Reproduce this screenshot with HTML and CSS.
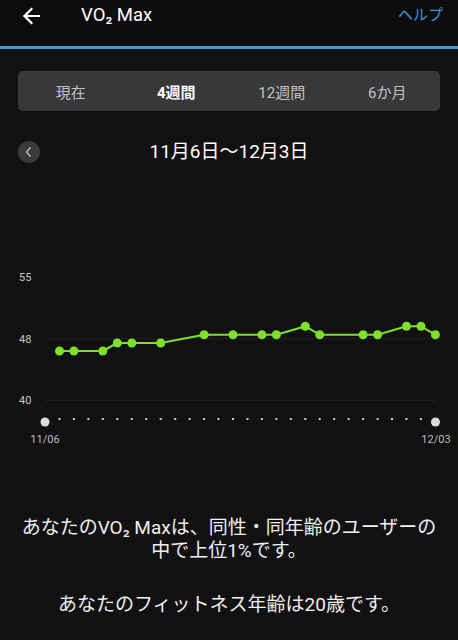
FILE: index.html
```html
<!DOCTYPE html>
<html lang="ja">
<head>
<meta charset="utf-8">
<link rel="stylesheet" href="styles.css">
</head>
<body>
<header class="topbar">
  <svg class="back-arrow" viewBox="0 0 18 18" width="18" height="18" aria-hidden="true">
    <path d="M17 9H2.5 M9.5 2L2.5 9L9.5 16" fill="none" stroke="#fff" stroke-width="2.2" stroke-linecap="square"/>
  </svg>
  <h1 class="title">VO₂ Max</h1>
  <a class="help">ヘルプ</a>
</header>

<section class="controls">
  <nav class="tabs">
    <div class="tab">現在</div>
    <div class="tab active">4週間</div>
    <div class="tab">12週間</div>
    <div class="tab">6か月</div>
  </nav>
  <div class="range">
    <div class="prev">
      <svg viewBox="0 0 22 22" width="22" height="22" aria-hidden="true">
        <path d="M12.5 6.5L8.5 11L12.5 15.5" fill="none" stroke="#bdbdbd" stroke-width="1.4"/>
      </svg>
    </div>
    <div class="range-text">11月6日〜12月3日</div>
    <div class="spacer"></div>
  </div>
</section>

<svg class="chart" viewBox="0 260 458 190" width="458" height="190">
  <g class="grid">
    <line x1="45" y1="338.7" x2="436" y2="338.7"/>
    <line x1="45" y1="400.3" x2="436" y2="400.3"/>
  </g>
  <g class="ylabels">
    <text x="19" y="280.5">55</text>
    <text x="19" y="342.5">48</text>
    <text x="19" y="404.2">40</text>
  </g>
  <g class="axis-dots">
    <rect x="58.5" y="418" width="2" height="2"/>
    <rect x="72.9" y="418" width="2" height="2"/>
    <rect x="87.4" y="418" width="2" height="2"/>
    <rect x="101.8" y="418" width="2" height="2"/>
    <rect x="116.3" y="418" width="2" height="2"/>
    <rect x="130.8" y="418" width="2" height="2"/>
    <rect x="145.2" y="418" width="2" height="2"/>
    <rect x="159.7" y="418" width="2" height="2"/>
    <rect x="174.2" y="418" width="2" height="2"/>
    <rect x="188.6" y="418" width="2" height="2"/>
    <rect x="203.1" y="418" width="2" height="2"/>
    <rect x="217.5" y="418" width="2" height="2"/>
    <rect x="232" y="418" width="2" height="2"/>
    <rect x="246.5" y="418" width="2" height="2"/>
    <rect x="260.9" y="418" width="2" height="2"/>
    <rect x="275.4" y="418" width="2" height="2"/>
    <rect x="289.8" y="418" width="2" height="2"/>
    <rect x="304.3" y="418" width="2" height="2"/>
    <rect x="318.7" y="418" width="2" height="2"/>
    <rect x="333.2" y="418" width="2" height="2"/>
    <rect x="347.6" y="418" width="2" height="2"/>
    <rect x="362.1" y="418" width="2" height="2"/>
    <rect x="376.6" y="418" width="2" height="2"/>
    <rect x="391" y="418" width="2" height="2"/>
    <rect x="405.5" y="418" width="2" height="2"/>
    <rect x="419.9" y="418" width="2" height="2"/>
  </g>
  <circle class="end-dot" cx="45" cy="422" r="4.5"/>
  <circle class="end-dot" cx="435.5" cy="422" r="4.5"/>
  <g class="xlabels">
    <text x="45" y="443">11/06</text>
    <text x="436" y="443">12/03</text>
  </g>
  <polyline class="series" points="59.5,351 73.9,351 102.8,351 117.3,343 131.8,343 160.7,343 204.1,334.7 233,334.7 261.9,334.7 276.4,334.7 305.3,326.3 319.7,334.7 363.1,334.7 377.6,334.7 406.5,326.3 421,326.3 435.4,334.7"/>
  <g class="points">
    <circle cx="59.5" cy="351" r="4.5"/>
    <circle cx="73.9" cy="351" r="4.5"/>
    <circle cx="102.8" cy="351" r="4.5"/>
    <circle cx="117.3" cy="343" r="4.5"/>
    <circle cx="131.8" cy="343" r="4.5"/>
    <circle cx="160.7" cy="343" r="4.5"/>
    <circle cx="204.1" cy="334.7" r="4.5"/>
    <circle cx="233" cy="334.7" r="4.5"/>
    <circle cx="261.9" cy="334.7" r="4.5"/>
    <circle cx="276.4" cy="334.7" r="4.5"/>
    <circle cx="305.3" cy="326.3" r="4.5"/>
    <circle cx="319.7" cy="334.7" r="4.5"/>
    <circle cx="363.1" cy="334.7" r="4.5"/>
    <circle cx="377.6" cy="334.7" r="4.5"/>
    <circle cx="406.5" cy="326.3" r="4.5"/>
    <circle cx="421" cy="326.3" r="4.5"/>
    <circle cx="435.4" cy="334.7" r="4.5"/>
  </g>
</svg>

<section class="summary">
  <p class="line">あなたのVO₂ Maxは、同性・同年齢のユーザーの<br>中で上位1%です。</p>
  <p class="line second">あなたのフィットネス年齢は20歳です。</p>
</section>
</body>
</html>
```

FILE: styles.css
```css
html, body {
  margin: 0;
  padding: 0;
}
body {
  background: #111111;
  color: #ffffff;
  font-family: Roboto, "Noto Sans CJK JP", sans-serif;
  width: 458px;
  overflow: hidden;
}
.topbar {
  display: flex;
  align-items: center;
  height: 31px;
  padding-bottom: 15px;
  background: #0c0c0c;
  border-bottom: 3px solid #3a9ad9;
}
.back-arrow {
  margin-left: 22px;
  flex: none;
}
.title {
  margin: 0 0 0 41px;
  font-size: 18.5px;
  font-weight: 400;
  color: #ffffff;
  flex: 1;
  line-height: 1;
}
.help {
  margin-right: 15px;
  font-size: 15px;
  color: #3a9ad9;
  line-height: 1;
}
.controls {
  padding: 22px 18px 0;
}
.tabs {
  display: grid;
  grid-template-columns: repeat(4, 1fr);
  height: 40px;
  background: #383838;
  border-radius: 5px;
}
.tab {
  display: flex;
  align-items: center;
  justify-content: center;
  font-size: 15px;
  color: #c2c2c2;
}
.tab.active {
  color: #ffffff;
  font-weight: 700;
}
.range {
  display: grid;
  grid-template-columns: 22px 1fr 22px;
  align-items: center;
  margin-top: 29px;
  height: 22px;
}
.prev {
  width: 22px;
  height: 22px;
  border-radius: 50%;
  background: #3a3a3a;
}
.prev svg {
  display: block;
}
.range-text {
  text-align: center;
  font-size: 19px;
  line-height: 22px;
  color: #ffffff;
  padding-top: 1px;
}
.chart {
  display: block;
  margin-top: 98px;
}
.grid line {
  stroke: #222222;
  stroke-width: 1;
}
.ylabels text {
  font-family: Roboto, sans-serif;
  font-size: 11px;
  fill: #c8c8c8;
}
.xlabels text {
  font-family: Roboto, sans-serif;
  font-size: 11px;
  fill: #bdbdbd;
  text-anchor: middle;
}
.axis-dots rect {
  fill: #cfcfcf;
}
.end-dot {
  fill: #dcdcdc;
}
.series {
  fill: none;
  stroke: #7ee02c;
  stroke-width: 2;
  stroke-linejoin: round;
}
.points circle {
  fill: #7ee02c;
}
.summary {
  margin-top: 66px;
  text-align: center;
}
.line {
  margin: 0;
  font-size: 19px;
  line-height: 23px;
  color: #f0f0f0;
  white-space: nowrap;
}
.line.second {
  margin-top: 31px;
}
```
